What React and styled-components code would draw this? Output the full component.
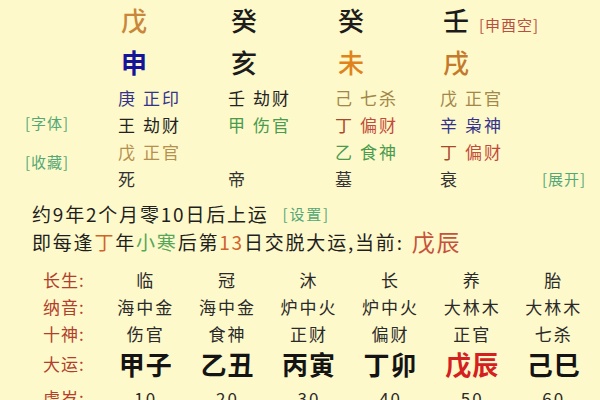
import React from "react";
import styled, { createGlobalStyle } from "styled-components";

const Global = createGlobalStyle`
  html, body { margin: 0; padding: 0; background: #fef9ca; }
`;

const Page = styled.div`
  width: 600px;
  height: 400px;
  overflow: hidden;
  background: #fef9ca;
  font-family: "Noto Sans CJK SC", "Noto Sans", sans-serif;
  color: #222;
`;

const Pillars = styled.div`
  display: grid;
  grid-template-columns: 118px 110px 107px 105px 102px 1fr;
  grid-template-rows: 39px 45px repeat(4, 27px);
  align-items: center;
`;

const Big = styled.div`
  font-size: 26px;
  line-height: 1;
  font-weight: ${(p) => (p.$bold ? 700 : 500)};
  color: ${(p) => p.$color || "#1c1c1c"};
  padding-left: 3px;
  display: flex;
  align-items: flex-end;
  gap: 10px;
  white-space: nowrap;
`;

const Tag = styled.span`
  font-size: 15px;
  font-weight: 400;
  color: ${(p) => p.$color};
  letter-spacing: 1px;
  padding-bottom: 1px;
`;

const Side = styled.div`
  grid-column: 1;
  grid-row: 3 / span 4;
  align-self: stretch;
  display: flex;
  flex-direction: column;
  padding: 30px 0 0 25px;
  gap: 21px;
`;

const Link = styled.span`
  font-size: 15px;
  line-height: 18px;
  color: #54a877;
  letter-spacing: 1px;
  white-space: nowrap;
`;

const Hidden = styled.div`
  font-size: 17px;
  line-height: 1;
  display: flex;
  gap: 6px;
  letter-spacing: 2px;
  white-space: nowrap;
`;

const Ink = styled.span`
  color: ${(p) => p.$color || "#222"};
`;

const Lines = styled.div`
  padding: 7px 0 11px 32px;
  display: flex;
  flex-direction: column;
`;

const Line = styled.div`
  height: 28px;
  display: flex;
  align-items: center;
  font-size: 19px;
  letter-spacing: 1.8px;
  white-space: nowrap;
  color: #1f1f1f;
`;

const Em = styled.span`
  color: ${(p) => p.$color};
  font-size: ${(p) => p.$size || "inherit"};
  margin-left: ${(p) => p.$gap || 0};
`;

const Table = styled.div`
  display: grid;
  grid-template-columns: 105px repeat(6, 81.6px);
  grid-template-rows: 27px 27px 27px 32px 27px;
  align-items: center;
`;

const Label = styled.div`
  padding-left: 43px;
  font-size: 17px;
  letter-spacing: 1px;
  color: #b0402c;
  white-space: nowrap;
  margin-top: ${(p) => p.$mt || 0};
`;

const Cell = styled.div`
  text-align: center;
  font-size: ${(p) => (p.$big ? "26px" : "17px")};
  font-weight: ${(p) => (p.$big ? 700 : 400)};
  letter-spacing: ${(p) => (p.$big ? "1px" : "2px")};
  color: ${(p) => p.$color || "#222"};
  white-space: nowrap;
  margin-top: ${(p) => p.$mt || 0};
`;

const C = {
  earth: "#c8873a",
  navy: "#33338c",
  blue: "#15159a",
  orange: "#e0831c",
  brown: "#c47a2c",
  tan: "#b58f4e",
  olive: "#a2874a",
  green: "#4b9b4e",
  redS: "#a84828",
  red: "#c24c3a",
  tag: "#b65042",
};

const hidden = [
  [
    [["庚", C.navy], ["正印", C.navy]],
    [["王", "#222"], ["劫财", "#222"]],
    [["戊", C.tan], ["正官", C.tan]],
    [["死", "#333"]],
  ],
  [
    [["壬", "#222"], ["劫财", "#222"]],
    [["甲", C.green], ["伤官", C.green]],
    [],
    [["帝", "#333"]],
  ],
  [
    [["己", C.olive], ["七杀", C.olive]],
    [["丁", C.redS], ["偏财", C.red]],
    [["乙", C.green], ["食神", C.green]],
    [["墓", "#333"]],
  ],
  [
    [["戊", C.olive], ["正官", C.olive]],
    [["辛", C.navy], ["枭神", C.navy]],
    [["丁", C.redS], ["偏财", C.red]],
    [["衰", "#333"]],
  ],
];

const table = [
  ["长生:", ["临", "冠", "沐", "长", "养", "胎"]],
  ["纳音:", ["海中金", "海中金", "炉中火", "炉中火", "大林木", "大林木"]],
  ["十神:", ["伤官", "食神", "正财", "偏财", "正官", "七杀"]],
  ["大运:", ["甲子", "乙丑", "丙寅", "丁卯", "戊辰", "己巳"], true],
  ["虚岁:", ["10", "20", "30", "40", "50", "60"]],
];

export default function App() {
  const hiddenCells = [];
  for (let r = 0; r < 4; r++) {
    for (let c = 0; c < 4; c++) {
      const parts = hidden[c][r];
      hiddenCells.push(
        <Hidden key={`h${r}${c}`} style={{ gridRow: r + 3, gridColumn: c + 2 }}>
          {parts.map(([t, col], i) => (
            <Ink key={i} $color={col}>{t}</Ink>
          ))}
        </Hidden>
      );
    }
  }
  return (
    <Page>
      <Global />
      <Pillars>
        <div />
        <Big $color={C.earth}>戊</Big>
        <Big>癸</Big>
        <Big>癸</Big>
        <Big>
          壬<Tag $color={C.tag}>[申酉空]</Tag>
        </Big>
        <div />
        <div />
        <Big $bold $color={C.blue}>申</Big>
        <Big>亥</Big>
        <Big $color={C.orange}>未</Big>
        <Big $color={C.brown}>戌</Big>
        <div />
        <Side>
          <Link>[字体]</Link>
          <Link>[收藏]</Link>
        </Side>
        {hiddenCells}
        <Link style={{ gridRow: 6, gridColumn: 6 }}>[展开]</Link>
      </Pillars>
      <Lines>
        <Line>
          约9年2个月零10日后上运<Em $color="#54a877" $size="15px" $gap="14px">[设置]</Em>
        </Line>
        <Line>
          即每逢<Em $color="#d0632c">丁</Em>年<Em $color="#55a85a">小寒</Em>后第
          <Em $color="#d0632c">13</Em>日交脱大运,当前:
          <Em $color="#c5523c" $size="23px" $gap="8px">戊辰</Em>
        </Line>
      </Lines>
      <Table>
        {table.map(([label, vals, big], ri) => (
          <React.Fragment key={ri}>
            <Label $mt={ri === 4 ? "9px" : 0}>{label}</Label>
            {vals.map((v, ci) => (
              <Cell
                key={ci}
                $big={big}
                $mt={ri === 4 ? "9px" : 0}
                $color={big && v === "戊辰" ? "#d42020" : big ? "#141414" : "#2a2a2a"}
              >
                {v}
              </Cell>
            ))}
          </React.Fragment>
        ))}
      </Table>
    </Page>
  );
}
